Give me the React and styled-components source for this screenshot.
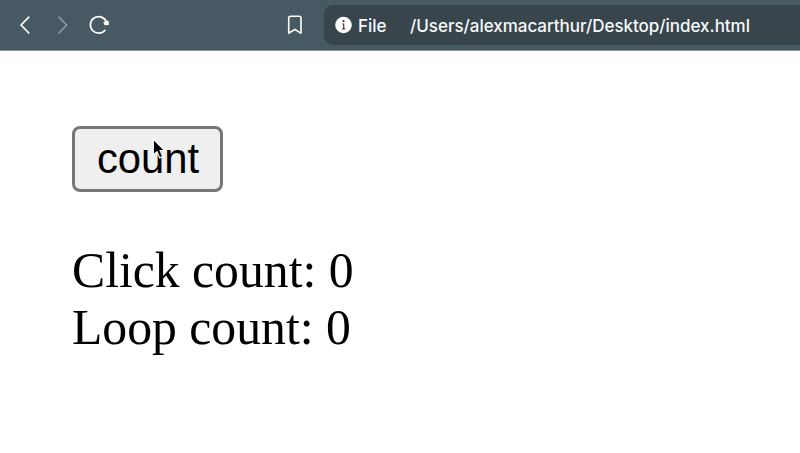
import React, { useState } from 'react';
import styled, { createGlobalStyle } from 'styled-components';

const GlobalStyle = createGlobalStyle`
  * { box-sizing: border-box; }
  body { margin: 0; background: #fff; overflow: hidden; }
`;

const Browser = styled.div`
  width: 800px;
  height: 453px;
  overflow: hidden;
  background: #fff;
`;

const Toolbar = styled.header`
  display: flex;
  align-items: center;
  height: 51px;
  padding-left: 14px;
  background: #475962;
  border-bottom: 1px solid #89949a;
`;

const Navigation = styled.nav`
  display: flex;
  flex: 1;
`;

const IconButton = styled.button`
  display: flex;
  width: ${({ $width }) => $width}px;
  height: 24px;
  padding: 0;
  border: 0;
  background: none;
  color: ${({ $muted }) => ($muted ? '#8799a5' : '#fff')};

  svg {
    fill: none;
    stroke: currentColor;
    stroke-width: ${({ $stroke }) => $stroke || 1.7};
    stroke-linecap: round;
    stroke-linejoin: round;
  }
`;

const AddressBar = styled.div`
  display: flex;
  align-items: center;
  flex: none;
  width: 476px;
  height: 40px;
  margin-left: 16px;
  padding: 0 0 0 11px;
  border-radius: 9px 0 0 9px;
  background: #38454c;
  color: #f7f9fa;
  font: 500 17px/24px Inter, sans-serif;
`;

const InfoIcon = styled.svg`
  flex: none;
  width: 17px;
  height: 18px;
`;

const Scheme = styled.span`
  width: 52px;
  margin-left: 6px;
  padding-top: 1px;
`;

const Address = styled.span`
  padding-top: 1px;
  letter-spacing: -0.03px;
  white-space: nowrap;
`;

const Page = styled.main`
  padding: 75px 72px 0;
`;

const CountButton = styled.button`
  position: relative;
  display: flex;
  align-items: center;
  justify-content: center;
  width: 151px;
  height: 66px;
  padding: 0 0 1px 1px;
  border: 3px solid #767676;
  border-radius: 8px;
  background: #efefef;
  color: #000;
  font: 41.8px/48px "Liberation Sans", Arial, sans-serif;
`;

const Cursor = styled.svg`
  position: absolute;
  left: 77px;
  top: 9px;
  width: 14px;
  height: 22px;
`;

const Results = styled.section`
  margin-top: 50px;
  color: #000;
  font: 49.7px/57px "Liberation Serif", "Times New Roman", serif;
`;

const Result = styled.div`
  white-space: nowrap;
`;

export default function App() {
  const [clicks, setClicks] = useState(0);
  return (
    <>
      <GlobalStyle />
      <Browser>
        <Toolbar>
          <Navigation>
            <IconButton $width={37} aria-label="Back">
              <svg width="24" height="24"><path d="M14.8 4.2 7 12l7.8 8" /></svg>
            </IconButton>
            <IconButton $width={37} $muted aria-label="Forward">
              <svg width="24" height="24"><path d="m8 4.2 7.6 7.8L8 20" /></svg>
            </IconButton>
            <IconButton $width={24} aria-label="Reload">
              <svg width="24" height="24">
                <path d="M18.1 8.2A8.3 8.3 0 1 0 17 17.3" />
                <path d="m19.9 8.5.2 2.7-3 .2-.8-1.8Z" fill="currentColor" />
              </svg>
            </IconButton>
          </Navigation>
          <IconButton $width={24} $stroke={1.6} aria-label="Bookmark">
            <svg width="24" height="24"><path d="M4.7 20.3V5.2q0-2 2-2h8.3q2 0 2 2v15.1l-6.1-3.9Z" /></svg>
          </IconButton>
          <AddressBar>
            <InfoIcon viewBox="0 0 17 18">
              <circle cx="8.5" cy="9" r="8.3" fill="#fff" />
              <circle cx="8.5" cy="5.2" r="1.1" fill="#38454c" />
              <path d="M7.2 8h1.5v4.8M7.1 12.8h3.1" fill="none" stroke="#38454c" strokeWidth="1.2" />
            </InfoIcon>
            <Scheme>File</Scheme>
            <Address>/Users/alexmacarthur/Desktop/index.html</Address>
          </AddressBar>
        </Toolbar>
        <Page>
          <CountButton onClick={() => setClicks(clicks + 1)}>
            count
            <Cursor viewBox="0 0 14 22" aria-hidden="true">
              <path d="M1.3 1v16l3.7-3.2 2.7 6.1 3-1.3L8.1 12.7h4.6Z" fill="#000" stroke="#fff" strokeWidth="1.2" />
            </Cursor>
          </CountButton>
          <Results>
            <Result>Click count: {clicks}</Result>
            <Result>Loop count: 0</Result>
          </Results>
        </Page>
      </Browser>
    </>
  );
}
